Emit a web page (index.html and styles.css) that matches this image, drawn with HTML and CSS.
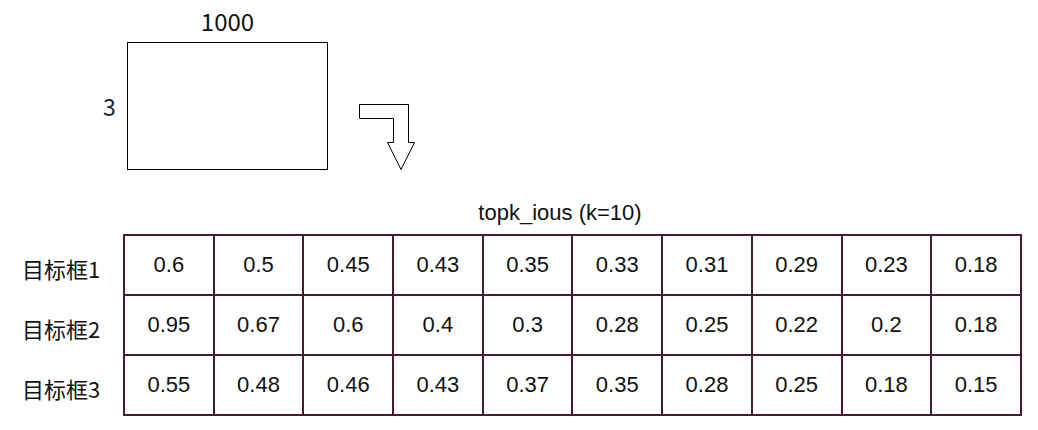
FILE: index.html
```html
<!DOCTYPE html>
<html>
<head>
<meta charset="utf-8">
<link rel="stylesheet" href="styles.css">
</head>
<body>
<div class="page">
  <div class="diagram">
    <div class="size-box">
      <div class="w-label">1000</div>
      <div class="h-label">3</div>
      <div class="rect"></div>
    </div>
    <svg class="arrow" width="58" height="66" viewBox="0 0 58 66">
      <polygon points="0.5,0.5 49.5,0.5 49.5,38.5 55.5,38.5 42,65.5 28.5,38.5 34.5,38.5 34.5,14.5 0.5,14.5" fill="#fff" stroke="#000" stroke-width="1"/>
    </svg>
  </div>
  <div class="results">
    <div class="title">topk_ious (k=10)</div>
    <div class="table-wrap">
      <div class="row-labels">
        <div class="row-label">目标框1</div>
        <div class="row-label">目标框2</div>
        <div class="row-label">目标框3</div>
      </div>
      <table class="grid">
        <tr><td>0.6</td><td>0.5</td><td>0.45</td><td>0.43</td><td>0.35</td><td>0.33</td><td>0.31</td><td>0.29</td><td>0.23</td><td>0.18</td></tr>
        <tr><td>0.95</td><td>0.67</td><td>0.6</td><td>0.4</td><td>0.3</td><td>0.28</td><td>0.25</td><td>0.22</td><td>0.2</td><td>0.18</td></tr>
        <tr><td>0.55</td><td>0.48</td><td>0.46</td><td>0.43</td><td>0.37</td><td>0.35</td><td>0.28</td><td>0.25</td><td>0.18</td><td>0.15</td></tr>
      </table>
    </div>
  </div>
</div>
</body>
</html>
```
FILE: styles.css
```css
html, body {
  margin: 0;
  padding: 0;
  background: #fff;
}
.page {
  width: 1038px;
  height: 430px;
  overflow: hidden;
}
.diagram {
  display: flex;
  align-items: flex-end;
  padding-left: 98px;
}
.size-box {
  display: grid;
  grid-template-columns: 29px 201px;
  grid-template-rows: 42px 128px;
}
.w-label {
  grid-column: 2;
  grid-row: 1;
  font-family: "Noto Sans CJK SC", "Noto Sans", sans-serif;
  font-size: 24px;
  color: #111;
  text-align: center;
  line-height: 42px;
}
.h-label {
  grid-column: 1;
  grid-row: 2;
  align-self: center;
  font-family: "Noto Sans CJK SC", "Noto Sans", sans-serif;
  font-size: 23px;
  color: #1a2233;
  line-height: 24px;
  padding-left: 5px;
}
.rect {
  grid-column: 2;
  grid-row: 2;
  box-sizing: border-box;
  border: 1px solid #000;
  width: 201px;
  height: 128px;
}
.arrow {
  display: block;
  margin-left: 31px;
}
.results {
  margin-top: 31px;
}
.title {
  margin-left: 123px;
  width: 874px;
  text-align: center;
  font-family: "Liberation Sans", Arial, sans-serif;
  font-size: 22px;
  color: #111;
  line-height: 24px;
  height: 24px;
  margin-bottom: 9px;
}
.table-wrap {
  display: flex;
  align-items: flex-start;
}
.row-labels {
  width: 123px;
  display: flex;
  flex-direction: column;
  padding-top: 1px;
}
.row-label {
  height: 60px;
  box-sizing: border-box;
  padding-left: 22px;
  padding-top: 6px;
  display: flex;
  align-items: center;
  font-family: "Noto Sans CJK SC", sans-serif;
  font-size: 22px;
  color: #111;
}
.grid {
  border-collapse: collapse;
  table-layout: fixed;
  width: 899px;
}
.grid td {
  border: 2px solid #4a1a33;
  height: 58px;
  padding: 0;
  text-align: center;
  font-family: "Liberation Sans", Arial, sans-serif;
  font-size: 22px;
  color: #111;
}
```
